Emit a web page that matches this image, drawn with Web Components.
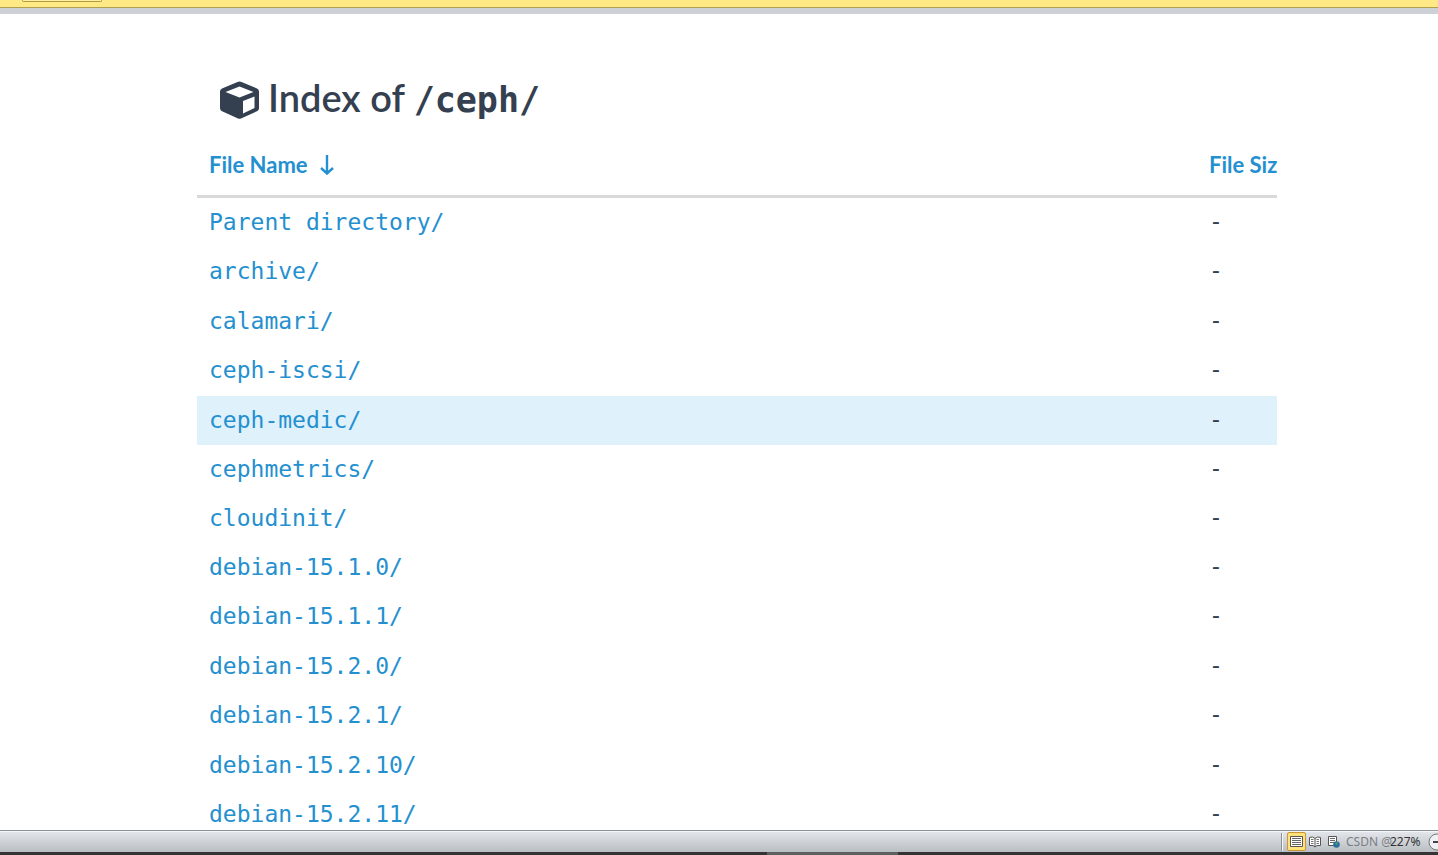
<!DOCTYPE html>
<html lang="en">
<head>
<meta charset="utf-8">
<title>Index of /ceph/</title>
<style>
  html, body { margin: 0; height: 100%; }
  body { background: #fff; font-family: Lato, "Liberation Sans", sans-serif; overflow: hidden; }
</style>
</head>
<body>
<app-window>
  <message-bar slot="top"></message-bar>
  <directory-index path="/ceph/"></directory-index>
  <status-bar slot="bottom"></status-bar>
</app-window>
<script>
class AppWindow extends HTMLElement {
  constructor() {
    super();
    this.attachShadow({ mode: "open" }).innerHTML = `
      <style>
        :host { display: flex; flex-direction: column; height: 100vh; }
        main { flex: 1; min-height: 0; overflow: hidden; }
      </style>
      <slot name="top"></slot>
      <main><slot></slot></main>
      <slot name="bottom"></slot>`;
  }
}
customElements.define("app-window", AppWindow);

class MessageBar extends HTMLElement {
  constructor() {
    super();
    this.attachShadow({ mode: "open" }).innerHTML = `
      <style>
        :host { display: block; }
        .notice { height: 7px; padding-left: 22px; background: #ffe985; border-bottom: 1px solid #b0a050; }
        .tab { width: 78px; height: 1px; border: 1px solid #b39b45; border-top: 0; border-radius: 0 0 2px 2px; background: #fff0a0; }
        .rule { height: 6px; background: #cdd1d6; }
      </style>
      <div class="notice"><div class="tab"></div></div>
      <div class="rule"></div>`;
  }
}
customElements.define("message-bar", MessageBar);

class DirectoryIndex extends HTMLElement {
  connectedCallback() {
    const names = ["Parent directory/", "archive/", "calamari/", "ceph-iscsi/", "ceph-medic/",
      "cephmetrics/", "cloudinit/", "debian-15.1.0/", "debian-15.1.1/", "debian-15.2.0/",
      "debian-15.2.1/", "debian-15.2.10/", "debian-15.2.11/"];
    const rows = names.map(n => `<tr${n === "ceph-medic/" ? ' class="hover"' : ""}><td><a href="#">${n}</a></td><td>-</td></tr>`).join("");
    this.attachShadow({ mode: "open" }).innerHTML = `
      <style>
        :host { display: block; padding: 60px 161px 0 197px; color: #34404f; }
        h1 { display: flex; align-items: center; gap: 8px; height: 52px; margin: 0 0 0 22px; font-size: 38px; font-weight: 600; white-space: pre; }
        h1 span { line-height: 48px; padding-bottom: 4px; }
        h1 code { font: 700 35px/48px "DejaVu Sans Mono", monospace; }
        svg { display: block; flex: none; }
        table { width: 100%; table-layout: fixed; border-collapse: separate; border-spacing: 0; }
        .size { width: 80px; }
        th, td { text-align: left; white-space: nowrap; overflow: hidden; }
        th { height: 61px; padding: 8px 0 0 12px; border-bottom: 3px solid #d9d9d9; font-size: 22px; line-height: 28px; font-weight: 700; }
        a { color: #2490cf; text-decoration: none; }
        th a { display: flex; align-items: center; gap: 12px; }
        td { box-sizing: border-box; height: 49px; padding: 0 0 2px 12px; font: 23px/28px "DejaVu Sans Mono", monospace; }
        tbody tr:nth-child(5n - 1) td, tbody tr:nth-child(9n + 2) td { height: 50px; }
        td:last-child { padding-bottom: 4px; }
        .hover td { background: #dff1fb; }
      </style>
      <h1><svg width="41" height="40" viewBox="0 0 41 40" aria-hidden="true"><path fill="#34404f" fill-rule="evenodd" d="M20.500 1.500Q21.500 1.500 22.500 2L38 8.500Q40 9.500 40 11.500V28Q40 30 38.500 31L22 38.500Q20.500 39.200 19 38.500L2.500 31Q1 30 1 28V11.500Q1 9.500 3 8.500L18.500 2Q19.500 1.500 20.500 1.500ZM20.500 6.500 6.500 12 20.500 17.500 34.500 12ZM24 21V33.500L35.500 28V16.500Z"/></svg><span>Index of <code>${this.getAttribute("path")}</code></span></h1>
      <table>
        <colgroup><col><col class="size"></colgroup>
        <thead><tr>
          <th scope="col"><a href="#">File Name <svg width="14" height="20" viewBox="0 0 14 20" fill="none" stroke="#2490cf" stroke-width="2.400" aria-hidden="true"><path d="M7 0V18M1 13 7 18.500 13 13"/></svg></a></th>
          <th scope="col"><a href="#">File Size</a></th>
        </tr></thead>
        <tbody>${rows}</tbody>
      </table>`;
  }
}
customElements.define("directory-index", DirectoryIndex);

class StatusBar extends HTMLElement {
  constructor() {
    super();
    this.attachShadow({ mode: "open" }).innerHTML = `
      <style>
        :host { display: block; overflow: hidden; }
        .bar { display: flex; align-items: center; justify-content: flex-end; height: 21px; margin-right: -8px; border-top: 1px solid #8d9097; background: linear-gradient(#e4e7ec, #b9bec3); box-shadow: inset 0 1px #f5f6f8; }
        .sep { width: 1px; height: 18px; margin-right: 4px; background: #8b9097; border-right: 1px solid #f5f6f8; }
        button { display: block; padding: 0; border: 0; background: none; width: 18px; height: 18px; flex: none; }
        button.on { width: 19px; height: 19px; border: 1px solid #c9973a; border-radius: 2px; background: #ffe27a; }
        svg { display: block; margin: auto; }
        .zoom { position: relative; display: flex; align-items: center; width: 86px; height: 20px; font: 12px/20px "Noto Sans", sans-serif; color: #333; }
        .mark { position: absolute; left: 4px; top: 0; color: #7b7e82; white-space: nowrap; }
        .pct { margin-left: 48px; }
        .task { display: flex; height: 3px; background: #353334; }
        .task i { width: 131px; height: 3px; margin-left: auto; margin-right: 540px; background: #605f60; }
      </style>
      <div class="bar">
        <div class="sep"></div>
        <button class="on" aria-label="Print layout"><svg width="13" height="13" viewBox="0 0 13 13"><path d="M.5 1.500h12v10H.5z" fill="#fff" stroke="#555"/><path d="M2 3.500h9M2 5.500h9M2 7.500h9M2 9.500h9" stroke="#666"/></svg></button>
        <button aria-label="Full screen reading"><svg width="12" height="12" viewBox="0 0 12 12"><path d="M.5 1.500 3.500 1 6 2.500 8.500 1 11.500 1.500V9.500H8L6 11 4 9.500H.5ZM6 2.500V11" fill="#fff" stroke="#555"/><path d="M2 3.500h2.500M2 5.500h2.500M2 7.500h2.500M7.500 3.500H10M7.500 5.500H10M7.500 7.500H10" stroke="#777"/></svg></button>
        <button aria-label="Web layout"><svg width="13" height="13" viewBox="0 0 13 13"><path d="M1.500 1.500h8v9h-8z" fill="#fff" stroke="#555"/><path d="M3 3.500h5M3 5.500h5M3 7.500h4" stroke="#666"/><circle cx="9.500" cy="9.500" r="3.300" fill="#2b6f9e"/><path d="M8 8l3-1-1 3z" fill="#58a84c"/></svg></button>
        <div class="zoom"><span class="mark">CSDN @</span><span class="pct">227%</span></div>
        <button aria-label="Zoom out"><svg width="18" height="18" viewBox="0 0 18 18"><circle cx="9" cy="9" r="8" fill="#eef0f3" stroke="#777"/><path d="M5 9h8" stroke="#444" stroke-width="2"/></svg></button>
      </div>
      <div class="task"><i></i></div>`;
  }
}
customElements.define("status-bar", StatusBar);
</script>
</body>
</html>
